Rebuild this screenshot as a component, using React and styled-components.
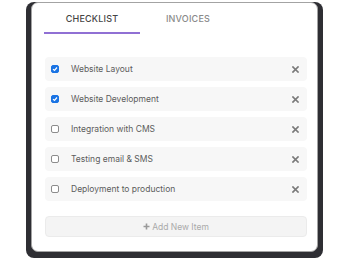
import React from "react";
import styled, { createGlobalStyle } from "styled-components";

const GlobalStyle = createGlobalStyle`
  html, body {
    margin: 0;
    padding: 0;
    background: #ffffff;
    font-family: Inter, "Noto Sans", sans-serif;
  }
`;

const items = [
  { id: 1, name: "Website Layout", done: true },
  { id: 2, name: "Website Development", done: true },
  { id: 3, name: "Integration with CMS", done: false },
  { id: 4, name: "Testing email & SMS", done: false },
  { id: 5, name: "Deployment to production", done: false },
];

const CheckIcon = () => (
  <svg width="6" height="6" viewBox="0 0 6 6">
    <path d="M1 3.1 L2.5 4.5 L5 1.5" fill="none" stroke="#fff" strokeWidth="1.2" />
  </svg>
);

const CloseIcon = () => (
  <svg width="7" height="7" viewBox="0 0 7 7">
    <path d="M1 1 L6 6 M6 1 L1 6" stroke="#7a7a7a" strokeWidth="1.7" strokeLinecap="square" />
  </svg>
);

const PlusIcon = () => (
  <svg width="7" height="7" viewBox="0 0 7 7">
    <path d="M3.5 0.5 V6.5 M0.5 3.5 H6.5" stroke="#9a9a9a" strokeWidth="1.6" />
  </svg>
);

const App = () => {
  const [tab, setTab] = React.useState("checklist");

  return (
    <>
      <GlobalStyle />
      <Stage>
        <Frame>
          <Card>
            <Tabs>
              <Tab $active={tab === "checklist"} onClick={() => setTab("checklist")}>
                Checklist
              </Tab>
              <Tab $active={tab === "invoices"} onClick={() => setTab("invoices")}>
                Invoices
              </Tab>
            </Tabs>
            <List>
              {items.map((item) => (
                <Row key={item.id}>
                  <Checkbox $checked={item.done}>{item.done && <CheckIcon />}</Checkbox>
                  <Label>{item.name}</Label>
                  <RemoveButton>
                    <CloseIcon />
                  </RemoveButton>
                </Row>
              ))}
            </List>
            <AddButton>
              <PlusIcon />
              Add New Item
            </AddButton>
          </Card>
        </Frame>
      </Stage>
    </>
  );
};

export default App;

const Stage = styled.div`
  padding: 2px 0 0 26px;
  width: 350px;
  height: 263px;
  box-sizing: border-box;
`;

const Frame = styled.div`
  width: 297px;
  margin-top: 12px;
  padding: 0 5px 6px 5px;
  box-sizing: border-box;
  background: #2e2e33;
  border-radius: 8px;
`;

const Card = styled.div`
  margin-top: -12px;
  width: 287px;
  height: 250px;
  box-sizing: border-box;
  background: #ffffff;
  border: 1px solid #a3a3a3;
  border-radius: 7px;
  display: flex;
  flex-direction: column;
`;

const Tabs = styled.div`
  display: flex;
  padding-left: 12px;
`;

const Tab = styled.div`
  width: 96px;
  padding: 10px 0 8px;
  line-height: 11px;
  font-size: 9px;
  font-weight: 500;
  letter-spacing: 0.2px;
  text-transform: uppercase;
  text-align: center;
  cursor: pointer;
  color: ${(props) => (props.$active ? "#454545" : "#8a8a8a")};
  border-bottom: 2px solid ${(props) => (props.$active ? "#9070d4" : "transparent")};
`;

const List = styled.div`
  display: flex;
  flex-direction: column;
  gap: 6px;
  margin-top: 23px;
  padding: 0 10px 0 13px;
`;

const Row = styled.div`
  display: flex;
  align-items: center;
  height: 24px;
  padding: 0 8px 0 6px;
  background: #f7f7f7;
  border-radius: 4px;
`;

const Checkbox = styled.span`
  width: 8px;
  height: 8px;
  box-sizing: border-box;
  border-radius: 2px;
  display: flex;
  align-items: center;
  justify-content: center;
  background: ${(props) => (props.$checked ? "#1b74e4" : "#ffffff")};
  border: 1px solid ${(props) => (props.$checked ? "#1b74e4" : "#8c8c8c")};
`;

const Label = styled.span`
  flex: 1;
  margin-left: 12px;
  font-size: 8.5px;
  color: #5c5c5c;
`;

const RemoveButton = styled.span`
  display: flex;
  cursor: pointer;
`;

const AddButton = styled.div`
  margin: 15px 10px 0 13px;
  height: 21px;
  box-sizing: border-box;
  display: flex;
  align-items: center;
  justify-content: center;
  gap: 2px;
  background: #f4f4f4;
  border: 1px solid #ebebeb;
  border-radius: 4px;
  font-size: 8.5px;
  color: #aaaaaa;
  cursor: pointer;
`;
